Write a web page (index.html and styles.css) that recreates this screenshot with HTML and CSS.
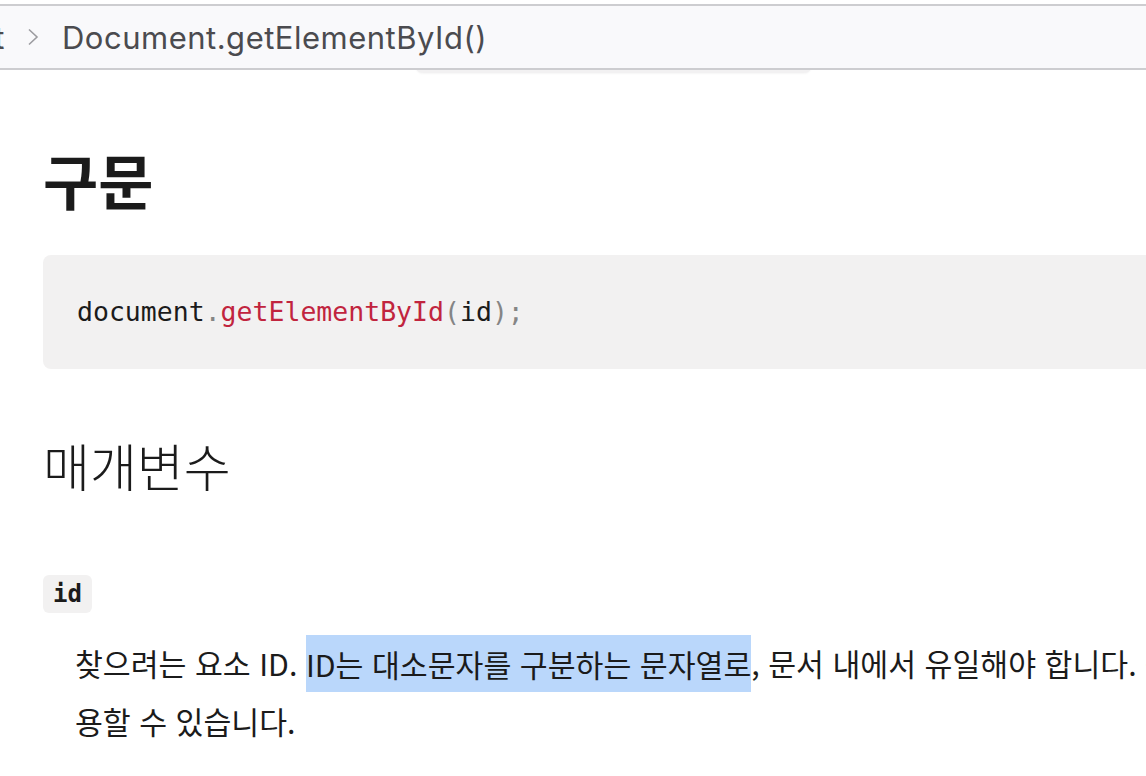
FILE: index.html
```html
<!DOCTYPE html>
<html lang="ko">
<head>
<meta charset="utf-8">
<title>Document.getElementById()</title>
<link rel="stylesheet" href="styles.css">
</head>
<body>
<header class="topbar">
  <nav class="crumbs">
    <span class="crumb-cut"><span class="crumb">Document</span></span>
    <svg class="chev" width="12" height="18" viewBox="0 0 12 18" aria-hidden="true"><polyline points="2,1.5 10,9 2,16.5" fill="none" stroke="#9c9ca0" stroke-width="1.6"/></svg>
    <span class="crumb crumb-current">Document.getElementById()</span>
  </nav>
</header>
<div class="menu-edge"></div>
<main class="content">
  <h2 class="h-syntax">구문</h2>
  <pre class="code"><code>document<span class="punc">.</span><span class="fn">getElementById</span><span class="punc">(</span>id<span class="punc">);</span></code></pre>
  <h3 class="h-params">매개변수</h3>
  <dl class="params">
    <dt><code class="chip">id</code></dt>
    <dd>찾으려는 요소 ID. <span class="sel">ID는 대소문자를 구분하는 문자열로</span>, 문서 내에서 유일해야 합니다. 즉, 하나의 값은 하나의 요소만 사<br>용할 수 있습니다.</dd>
  </dl>
</main>
</body>
</html>
```
FILE: styles.css
```css
html, body {
  margin: 0;
  padding: 0;
  background: #ffffff;
  overflow: hidden;
}
body {
  width: 1146px;
  height: 776px;
  position: relative;
  font-family: "Noto Sans CJK KR", "Noto Sans", sans-serif;
  color: #1b1b1b;
}
.topbar {
  margin-top: 4px;
  height: 62px;
  background: #f9f9fb;
  border-top: 2px solid #cdcdd0;
  border-bottom: 2px solid #cdcdd0;
  position: relative;
  z-index: 2;
  overflow: hidden;
}
.crumbs {
  display: flex;
  align-items: center;
  height: 100%;
  white-space: nowrap;
}
.crumb {
  font-family: Inter, "Liberation Sans", sans-serif;
  font-size: 31px;
  letter-spacing: 0.5px;
  color: #4b4b4f;
}
.crumb-cut {
  display: flex;
  justify-content: flex-end;
  width: 5px;
  overflow: hidden;
  flex: none;
}
.chev {
  margin-left: 22px;
  margin-right: 23px;
  flex: none;
}
.menu-edge {
  position: absolute;
  left: 415px;
  top: 62px;
  width: 397px;
  height: 11px;
  background: #f2f1f2;
  border-radius: 0 0 8px 8px;
  box-shadow: 0 1px 2px rgba(0,0,0,0.04);
  z-index: 1;
}
.content {
  padding-left: 43px;
  width: 1400px;
}
.h-syntax {
  margin: 64px 0 0;
  font-size: 60px;
  font-weight: 700;
  line-height: 90px;
}
.code {
  margin: 31px 0 0;
  background: #f2f1f1;
  border-radius: 8px;
  padding: 37px 34px;
  font-family: "DejaVu Sans Mono", "Liberation Mono", monospace;
  font-size: 26.5px;
  line-height: 40px;
  color: #1b1b1b;
}
.code .fn { color: #c1243e; }
.code .punc { color: #858585; }
.h-params {
  margin: 56px 0 0;
  font-size: 51px;
  font-weight: 300;
  line-height: 80px;
}
.params {
  margin: 70px 0 0;
}
.params dt {
  display: flex;
}
.chip {
  background: #f2f1f1;
  border-radius: 6px;
  padding: 3px 10px;
  font-family: "DejaVu Sans Mono", "Liberation Mono", monospace;
  font-weight: 700;
  font-size: 24px;
  line-height: 32px;
  color: #1b1b1b;
}
.params dd {
  margin: 21px 0 0 32px;
  font-size: 30.3px;
  line-height: 58px;
  white-space: nowrap;
}
.sel {
  background: #bad7fb;
  padding: 6.5px 0;
}
```
